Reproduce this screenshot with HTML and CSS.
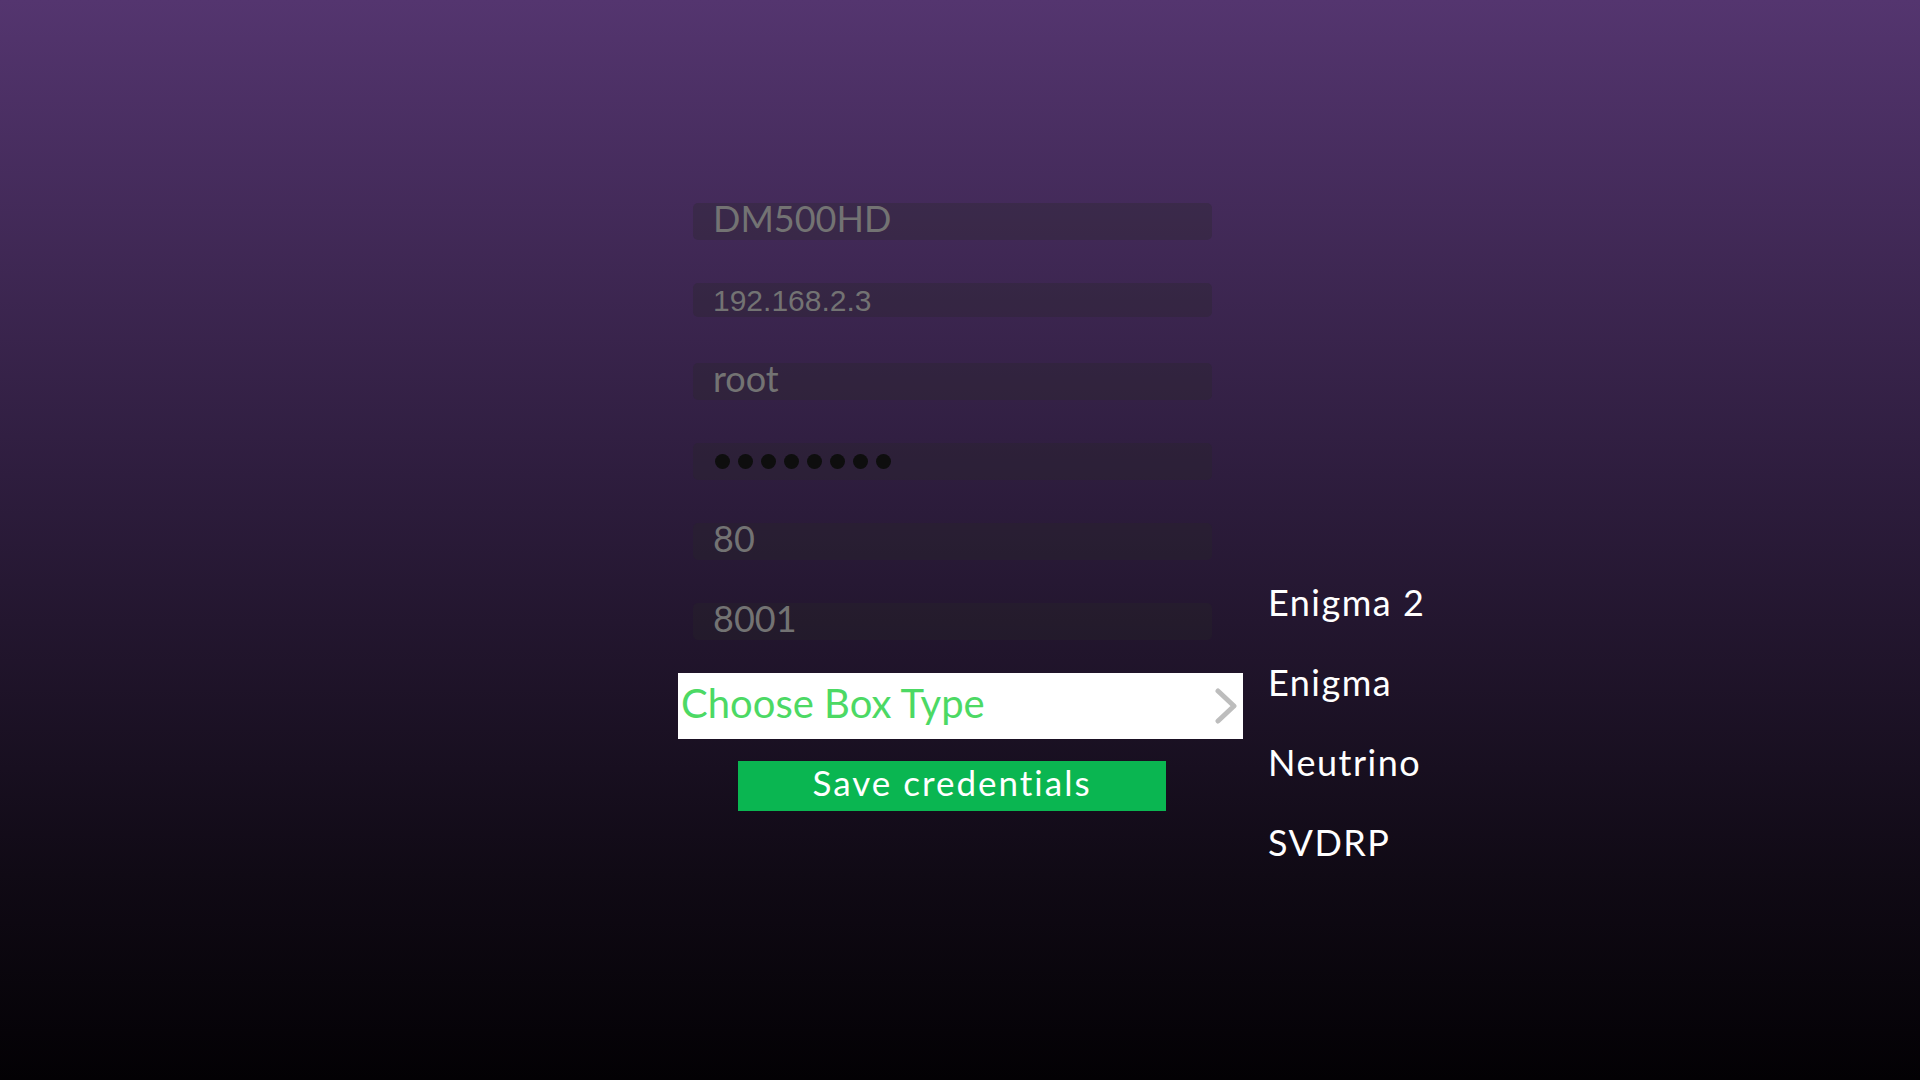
FILE: index.html
```html
<!DOCTYPE html>
<html lang="en">
<head>
<meta charset="utf-8">
<title>Box Settings</title>
<link rel="stylesheet" href="styles.css">
</head>
<body>
<main class="screen">
  <section class="form">
    <div class="field">DM500HD</div>
    <div class="field field-ip">192.168.2.3</div>
    <div class="field">root</div>
    <div class="field field-dots">
      <span class="dot"></span><span class="dot"></span><span class="dot"></span><span class="dot"></span><span class="dot"></span><span class="dot"></span><span class="dot"></span><span class="dot"></span>
    </div>
    <div class="field">80</div>
    <div class="field">8001</div>
    <div class="choose">
      <span class="choose-label">Choose Box Type</span>
      <svg class="chevron" width="22" height="36" viewBox="0 0 22 36"><path d="M3 3 L19 18 L3 33" fill="none" stroke="#bdbdbd" stroke-width="5" stroke-linecap="round" stroke-linejoin="round"/></svg>
    </div>
    <div class="save">Save credentials</div>
  </section>
  <ul class="types">
    <li>Enigma 2</li>
    <li>Enigma</li>
    <li>Neutrino</li>
    <li>SVDRP</li>
  </ul>
</main>
</body>
</html>
```
FILE: styles.css
```css
html, body {
  margin: 0;
  padding: 0;
}
body {
  width: 1920px;
  height: 1080px;
  background: linear-gradient(to bottom, #54356f 0%, #2e1d3e 44%, #100a15 81%, #030104 100%);
  font-family: "Lato", "Open Sans", sans-serif;
  font-weight: 400;
  overflow: hidden;
}
.screen {
  display: flex;
  align-items: flex-start;
  padding-left: 678px;
  padding-top: 203px;
}
.form {
  width: 565px;
  display: flex;
  flex-direction: column;
}
.field {
  margin-left: 15px;
  width: 519px;
  height: 37px;
  box-sizing: border-box;
  padding-left: 20px;
  border-radius: 5px;
  background: rgba(40, 40, 40, 0.3);
  color: #737373;
  font-size: 36px;
  line-height: 30px;
  margin-bottom: 43px;
  white-space: nowrap;
}
.field-ip {
  height: 34px;
  font-family: "Liberation Sans", Arial, sans-serif;
  font-size: 30px;
  line-height: 36px;
  margin-bottom: 46px;
}
.field-dots {
  display: flex;
  align-items: center;
  gap: 8px;
  padding-left: 22px;
}
.dot {
  width: 15px;
  height: 15px;
  border-radius: 50%;
  background: #0e0e0e;
}
.field:nth-child(6) {
  margin-bottom: 33px;
}
.choose {
  height: 66px;
  background: #ffffff;
  display: flex;
  align-items: center;
  justify-content: space-between;
  padding: 0 6px 0 3px;
}
.choose-label {
  align-self: flex-start;
  color: #4cd964;
  font-size: 40px;
  line-height: 60px;
}
.chevron {
  display: block;
}
.save {
  margin-top: 22px;
  margin-left: 60px;
  width: 428px;
  height: 50px;
  background: #0ab651;
  color: #ffffff;
  font-size: 35px;
  letter-spacing: 2px;
  line-height: 42px;
  text-align: center;
}
.types {
  list-style: none;
  margin: 0 0 0 25px;
  padding: 359px 0 0 0;
  color: #ffffff;
  font-size: 36px;
  letter-spacing: 1.5px;
}
.types li {
  height: 80px;
  line-height: 80px;
}
```
